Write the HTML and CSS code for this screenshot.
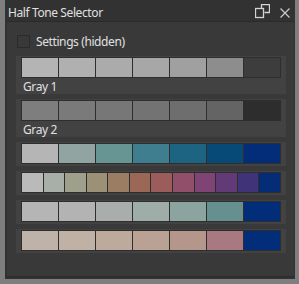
FILE: index.html
```html
<!DOCTYPE html>
<html lang="en">
<head>
    <meta charset="UTF-8">
    <title>Half Tone Selector</title>
    <link rel="stylesheet" href="styles.css">
</head>
<body>
    <div class="window">
        <div class="titlebar">
            <span class="title">Half Tone Selector</span>
            <svg class="icon-restore" width="15" height="15" viewBox="0 0 15 15">
                <path d="M6.5 4.5 V0.5 H14.5 V8.5 H9.5" fill="none" stroke="#d4d4d4" stroke-width="1.3"/>
                <rect x="0.5" y="4.5" width="8" height="9" fill="none" stroke="#d4d4d4" stroke-width="1.3"/>
            </svg>
            <svg class="icon-close" width="10" height="10" viewBox="0 0 10 10">
                <path d="M0.5 0.5 L9.5 9.5 M9.5 0.5 L0.5 9.5" stroke="#c8c8c8" stroke-width="1.3"/>
            </svg>
        </div>
        <div class="panel">
            <label class="settings">
                <span class="checkbox"></span>
                <span>Settings (hidden)</span>
            </label>
            <div class="rows">
                <div class="group">
                    <div class="swatches">
                        <div class="swatch" style="background:#b4b4b4"></div>
                        <div class="swatch" style="background:#b0b0b0"></div>
                        <div class="swatch" style="background:#ababab"></div>
                        <div class="swatch" style="background:#a7a7a7"></div>
                        <div class="swatch" style="background:#a0a0a0"></div>
                        <div class="swatch" style="background:#8d8d8d"></div>
                        <div class="swatch" style="background:#3d3d3d"></div>
                    </div>
                    <div class="label">Gray 1</div>
                </div>
                <div class="group">
                    <div class="swatches">
                        <div class="swatch" style="background:#7e7e7e"></div>
                        <div class="swatch" style="background:#7a7a7a"></div>
                        <div class="swatch" style="background:#777777"></div>
                        <div class="swatch" style="background:#737373"></div>
                        <div class="swatch" style="background:#6e6e6e"></div>
                        <div class="swatch" style="background:#646464"></div>
                        <div class="swatch" style="background:#2d2d2d"></div>
                    </div>
                    <div class="label">Gray 2</div>
                </div>
                <div class="group row">
                    <div class="swatches">
                        <div class="swatch" style="background:#b5b5b5"></div>
                        <div class="swatch" style="background:#92a4a2"></div>
                        <div class="swatch" style="background:#669593"></div>
                        <div class="swatch" style="background:#3e7e8e"></div>
                        <div class="swatch" style="background:#1d6482"></div>
                        <div class="swatch" style="background:#074a78"></div>
                        <div class="swatch" style="background:#032d78"></div>
                    </div>
                </div>
                <div class="group row">
                    <div class="swatches">
                        <div class="swatch" style="background:#bababa"></div>
                        <div class="swatch" style="background:#a7afa8"></div>
                        <div class="swatch" style="background:#9ea08b"></div>
                        <div class="swatch" style="background:#9b9177"></div>
                        <div class="swatch" style="background:#9a7d63"></div>
                        <div class="swatch" style="background:#9b6857"></div>
                        <div class="swatch" style="background:#9a5d5b"></div>
                        <div class="swatch" style="background:#924f69"></div>
                        <div class="swatch" style="background:#7f4374"></div>
                        <div class="swatch" style="background:#633a78"></div>
                        <div class="swatch" style="background:#413378"></div>
                        <div class="swatch" style="background:#052c77"></div>
                    </div>
                </div>
                <div class="group row">
                    <div class="swatches">
                        <div class="swatch" style="background:#b5b5b5"></div>
                        <div class="swatch" style="background:#b3b3b3"></div>
                        <div class="swatch" style="background:#a9aeac"></div>
                        <div class="swatch" style="background:#9fada9"></div>
                        <div class="swatch" style="background:#8ca49f"></div>
                        <div class="swatch" style="background:#65908f"></div>
                        <div class="swatch" style="background:#022d78"></div>
                    </div>
                </div>
                <div class="group row">
                    <div class="swatches">
                        <div class="swatch" style="background:#bfb3a9"></div>
                        <div class="swatch" style="background:#bfb1a4"></div>
                        <div class="swatch" style="background:#bdaa9d"></div>
                        <div class="swatch" style="background:#b9a194"></div>
                        <div class="swatch" style="background:#b5968b"></div>
                        <div class="swatch" style="background:#a97982"></div>
                        <div class="swatch" style="background:#022d78"></div>
                    </div>
                </div>
            </div>
        </div>
    </div>
</body>
</html>
```

FILE: styles.css
```css
body {
    margin: 0;
    background-color: #7f7f7f;
    font-family: 'Noto Sans', sans-serif;
    font-size: 12px;
    letter-spacing: -0.4px;
    color: #e0e0e0;
}
.window {
    margin-left: 5px;
    width: 290px;
    height: 279px;
    background-color: #323232;
    display: flex;
    flex-direction: column;
}
.titlebar {
    height: 21px;
    display: flex;
    align-items: center;
    padding: 0 0 0 3px;
}
.title {
    flex: 1;
    padding-top: 3px;
}
.icon-restore {
    margin-right: 10px;
    margin-top: 2px;
}
.icon-close {
    margin-right: 5px;
    margin-top: 5px;
}
.panel {
    flex: 1;
    margin: 0 1px 2px 2px;
    background-color: #393939;
    border-top: 1px solid #2a2a2a;
    border-bottom: 1px solid #2a2a2a;
    padding: 0 8px 0 9px;
}
.settings {
    display: flex;
    align-items: center;
    height: 18px;
    margin-top: 10px;
    margin-bottom: 6px;
    padding-left: 1px;
    gap: 6px;
}
.checkbox {
    width: 11px;
    height: 11px;
    border: 1px solid #2b2b2b;
    background-color: #393939;
}
.rows {
    display: flex;
    flex-direction: column;
    gap: 5px;
}
.group {
    background-color: #424242;
    padding: 1px 5px 0 5px;
    height: 37px;
}
.group.row {
    height: 21px;
    padding-bottom: 2px;
}
.swatches {
    display: flex;
    gap: 1px;
    padding: 1px;
    height: 19px;
    background-color: #2e2e2e;
}
.swatch {
    flex: 1;
}
.label {
    height: 16px;
    line-height: 16px;
    padding: 1px 0 0 2px;
}
```
